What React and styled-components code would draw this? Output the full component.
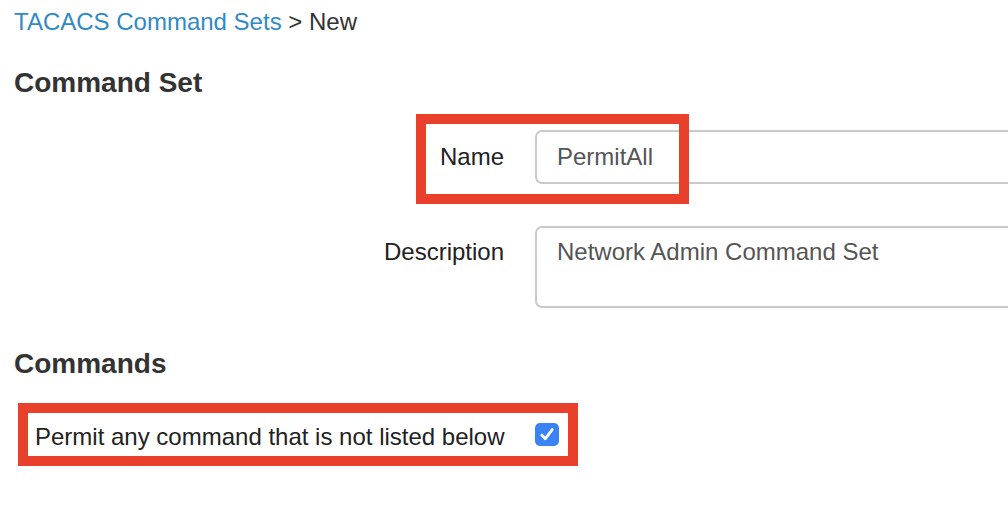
import React from "react";
import styled, { createGlobalStyle } from "styled-components";

const GlobalStyle = createGlobalStyle`
  html, body {
    margin: 0;
    padding: 0;
    background: #fff;
    overflow: hidden;
  }
  body {
    font-family: "Liberation Sans", Arial, Helvetica, sans-serif;
    color: #222;
  }
`;

const Page = styled.div`
  width: 1008px;
  height: 518px;
  padding-left: 14px;
  box-sizing: border-box;
  overflow: hidden;
`;

const Breadcrumb = styled.div`
  margin-top: 8px;
  font-size: 24px;
  line-height: 28px;
  color: #333;

  a {
    color: #3089c9;
    text-decoration: none;
  }
`;

const Heading = styled.h2`
  margin: ${(p) => p.$top}px 0 0;
  font-size: 28px;
  line-height: 32px;
  font-weight: bold;
  color: #333;
`;

const Form = styled.div`
  display: flex;
  flex-direction: column;
  gap: 42px;
  margin-top: 31px;
`;

const Row = styled.div`
  position: relative;
  display: grid;
  grid-template-columns: 490px 560px;
  column-gap: 31px;
  align-items: ${(p) => (p.$top ? "start" : "center")};
`;

const Label = styled.label`
  text-align: right;
  font-size: 24px;
  line-height: 28px;
  color: #222;
  padding-top: ${(p) => (p.$top ? "12px" : "0")};
`;

const Input = styled.div`
  box-sizing: border-box;
  height: ${(p) => p.$height}px;
  border: 2px solid #c8c9cc;
  border-radius: 7px;
  padding: ${(p) => (p.$multi ? "10px 20px" : "0 20px")};
  display: flex;
  align-items: ${(p) => (p.$multi ? "flex-start" : "center")};
  font-size: 24px;
  line-height: 28px;
  color: #555;
`;

const Callout = styled.div`
  position: absolute;
  left: 402px;
  top: -16px;
  width: 273px;
  height: 90px;
  box-sizing: border-box;
  border: 10px solid #e9402b;
  pointer-events: none;
`;

const CheckRow = styled.div`
  margin: 23px 0 0 4px;
  width: 560px;
  height: 63px;
  box-sizing: border-box;
  border: 10px solid #e9402b;
  display: flex;
  align-items: center;
  padding: 4px 9px 0 7px;
  font-size: 24px;
  line-height: 28px;
  color: #222;
  white-space: nowrap;
`;

const Box = styled.span`
  flex: none;
  margin-left: auto;
  width: 24px;
  height: 23px;
  border-radius: 5px;
  background: #3a83f6;
  display: flex;
  align-items: center;
  justify-content: center;
  margin-top: -5px;
`;

function Check() {
  return (
    <svg width="16" height="15" viewBox="0 0 16 15">
      <path
        d="M2.8 8 L6.3 11.8 L13.2 2.6"
        fill="none"
        stroke="#fff"
        strokeWidth="2.8"
        strokeLinecap="round"
        strokeLinejoin="round"
      />
    </svg>
  );
}

export default function App() {
  return (
    <>
      <GlobalStyle />
      <Page>
        <Breadcrumb>
          <a href="#sets">TACACS Command Sets</a> &gt; New
        </Breadcrumb>
        <Heading $top={31}>Command Set</Heading>
        <Form>
          <Row>
            <Label>Name</Label>
            <Input $height={54}>PermitAll</Input>
            <Callout />
          </Row>
          <Row $top>
            <Label $top>Description</Label>
            <Input $height={82} $multi>
              Network Admin Command Set
            </Input>
          </Row>
        </Form>
        <Heading $top={40}>Commands</Heading>
        <CheckRow>
          <span>Permit any command that is not listed below</span>
          <Box>
            <Check />
          </Box>
        </CheckRow>
      </Page>
    </>
  );
}
